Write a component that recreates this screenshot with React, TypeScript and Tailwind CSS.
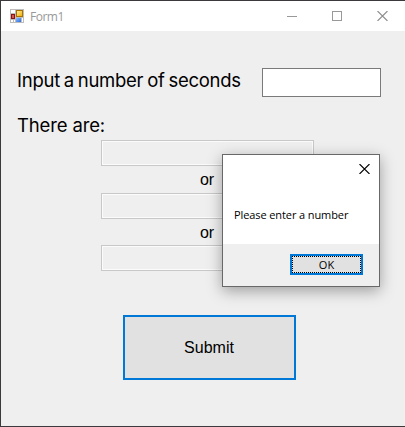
function FormIcon() {
  return (
    <svg className="block" width="14" height="14" viewBox="0 0 14 14" shapeRendering="crispEdges">
      <defs>
        <linearGradient id="gold" x1="0" y1="0" x2="1" y2="1">
          <stop offset="0" stopColor="#ffe9a0" />
          <stop offset="1" stopColor="#f2b200" />
        </linearGradient>
        <linearGradient id="blue" x1="0" y1="0" x2="1" y2="1">
          <stop offset="0" stopColor="#8fbcff" />
          <stop offset="1" stopColor="#2b6be0" />
        </linearGradient>
      </defs>
      <rect width="14" height="14" fill="#bdbdbd" />
      <rect x="1" y="1" width="4" height="3" fill="#fff" />
      <rect x="1" y="11" width="2" height="2" fill="#fff" />
      <rect x="4" y="11" width="1" height="2" fill="#fff" />
      <rect x="12" y="9" width="1" height="4" fill="#fff" />
      <rect x="6" y="1" width="7" height="7" fill="#a87200" />
      <rect x="7" y="2" width="5" height="5" fill="url(#gold)" />
      <rect x="1" y="5" width="4" height="5" fill="#8e1010" />
      <rect x="2" y="6" width="2" height="3" fill="#d9564a" />
      <rect x="6" y="9" width="5" height="4" fill="url(#blue)" />
    </svg>
  );
}

function CloseIcon({ color }: { color: string }) {
  return (
    <svg className="block" width="11" height="10" viewBox="0 0 11 10" stroke={color} strokeWidth="1.1">
      <path d="M0.5 0L10.5 10M10.5 0L0.5 10" />
    </svg>
  );
}

function TitleBar() {
  return (
    <header className="flex h-[30px] items-center bg-white pl-[9px] pr-[17px]">
      <FormIcon />
      <span className="ml-[6px] mt-px font-['Open_Sans','Noto_Sans',sans-serif] text-[12px] leading-4 tracking-[-0.5px] text-[#999999]">
        Form1
      </span>
      <div className="ml-auto flex items-center gap-[35px]">
        <div className="h-px w-[10px] bg-[#999999]" />
        <div className="size-[10px] border border-[#999999]" />
        <CloseIcon color="#8c8c8c" />
      </div>
    </header>
  );
}

function ResultBox() {
  return <div className="h-[26px] w-[213px] border border-[#c8c8c8] shadow-[inset_0_0_0_1px_#fbfbfb]" />;
}

function Or() {
  return <div className="flex w-[213px] flex-1 items-center justify-center pr-px pt-[2px]">or</div>;
}

function MessageBox() {
  return (
    <div
      role="dialog"
      className="absolute left-[221px] top-[153px] flex h-[133px] w-[158px] flex-col border border-[#686868] bg-white font-['Open_Sans','Noto_Sans',sans-serif] text-[11px] text-black shadow-[0_4px_14px_0px_rgba(0,0,0,0.34)]"
    >
      <div className="flex justify-end pr-[9px] pt-[9px]">
        <CloseIcon color="#000000" />
      </div>
      <p className="mt-[33px] whitespace-nowrap pl-[11px] leading-4 tracking-[-0.1px]">Please enter a number</p>
      <div className="mt-auto flex h-[42px] justify-end bg-[#efefef] pr-4 pt-[10px]">
        <button className="h-[21px] w-[73px] border-2 border-[#0078d7] bg-[#e1e1e1]">
          <span className="flex h-full items-center justify-center border border-dotted border-black leading-none">
            OK
          </span>
        </button>
      </div>
    </div>
  );
}

export default function App() {
  return (
    <div className="relative flex h-[427px] w-[405px] flex-col overflow-hidden border-b border-l border-t border-[#3b393b] bg-[#efefef] font-['Liberation_Sans',Arial,sans-serif] text-[16px] leading-5 text-black">
      <TitleBar />
      <main className="flex flex-1 flex-col pl-4">
        <div className="mt-[37px] flex h-[29px]">
          <label className="w-[245px] whitespace-nowrap font-['Inter',sans-serif] text-[18.5px] leading-6 tracking-[-0.26px] [word-spacing:-1.1px]">
            Input a number of seconds
          </label>
          <div className="h-[29px] w-[119px] border border-[#7a7a7a] bg-white" />
        </div>
        <h2 className="mt-4 h-[27px] font-['Inter',sans-serif] text-[18.5px] leading-6 tracking-[-0.15px]">
          There are:
        </h2>
        <div className="ml-[84px] flex h-[131px] flex-col">
          <ResultBox />
          <Or />
          <ResultBox />
          <Or />
          <ResultBox />
        </div>
        <button className="ml-[106px] mt-11 h-[65px] w-[173px] border-2 border-[#0078d7] bg-[#e1e1e1] pr-px">
          Submit
        </button>
      </main>
      <MessageBox />
    </div>
  );
}
